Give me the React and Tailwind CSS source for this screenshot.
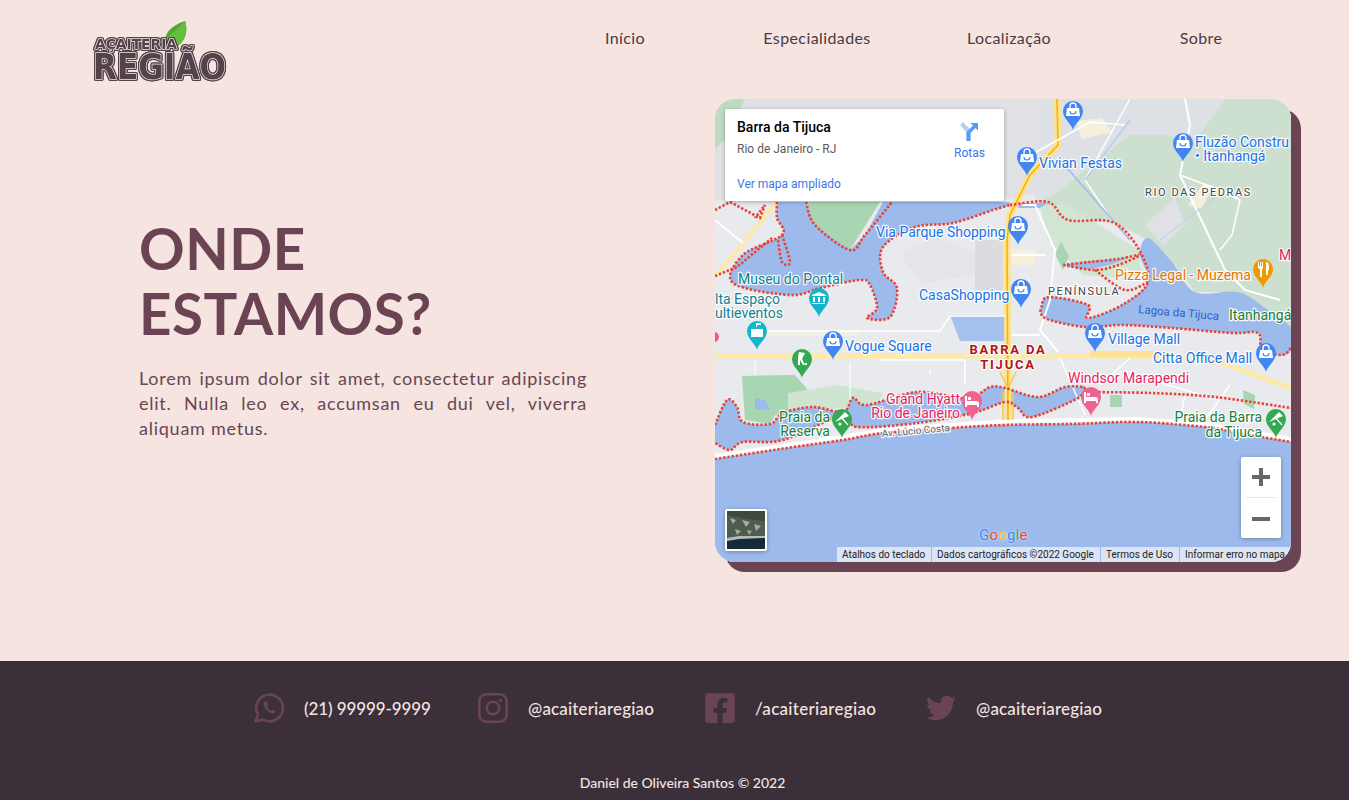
import React from "react";
import { FaFacebookSquare, FaTwitter } from "react-icons/fa";

const sans = "font-['Lato','Noto_Sans',sans-serif]";
const road = "fill-none stroke-white";

function smooth(s, close = false) {
  const p = s.trim().split(/\s+/).map((q) => q.split(",").map(Number));
  const n = p.length;
  const at = (i) => (close ? p[(i + n) % n] : p[Math.max(0, Math.min(n - 1, i))]);
  let d = `M${p[0][0]} ${p[0][1]}`;
  const last = close ? n : n - 1;
  for (let i = 0; i < last; i++) {
    const a = at(i - 1), b = at(i), c = at(i + 1), e = at(i + 2);
    const c1 = [b[0] + (c[0] - a[0]) / 6, b[1] + (c[1] - a[1]) / 6];
    const c2 = [c[0] - (e[0] - b[0]) / 6, c[1] - (e[1] - b[1]) / 6];
    d += `C${c1[0].toFixed(1)} ${c1[1].toFixed(1)} ${c2[0].toFixed(1)} ${c2[1].toFixed(1)} ${c[0]} ${c[1]}`;
  }
  return close ? d + "Z" : d;
}

const COAST = "715,459 780,449 843,440 883,433 950,428 1005,425 1072,424 1138,422 1205,427 1238,433 1291,442";
const LAGOON_W = "777,202 777,218 782,235 743,255 733,283 790,295 820,288 860,280 870,285 877,308 867,318 890,317 897,288 883,272 883,247 915,227 953,223 993,210 1010,205";
const LAGOON_E = "1148,238 1172,262 1195,292 1238,292 1265,308 1291,328 1291,350 1282,355 1262,350 1258,333 1232,333 1172,328 1122,325 1085,327 1045,318 1042,305 1050,297 1088,305 1088,318 1122,305 1148,282 1140,255";
const BEACH_TOP = "715,425 727,400 737,407 743,422 770,424 783,413 813,407 843,412 853,398 867,405 917,392 960,398 977,395 990,387 1005,388 1038,397 1065,387 1085,387";
const BEACH_BOT = "1085,387 1078,398 1032,417 1018,408 1005,402 973,413 917,423 857,427 843,415 783,440 743,442 730,450 715,443";

function Pin({ x, y, color, kind }) {
  const cx = x, cy = y - 19;
  return (
    <g>
      <path d={`M${x} ${y}C${x - 1} ${y - 6} ${x - 10} ${y - 11} ${x - 10} ${y - 19}a10 10 0 1 1 20 0C${x + 10} ${y - 11} ${x + 1} ${y - 6} ${x} ${y}Z`} fill={color} />
      {kind === "bag" && (
        <g>
          <path d={`M${cx - 6} ${cy - 3}h12l1 8h-14Z`} fill="#fff" />
          <path d={`M${cx - 3} ${cy - 3}v-2a3 3 0 0 1 6 0v2`} fill="none" stroke="#fff" strokeWidth="1.3" />
          <path d={`M${cx - 3} ${cy}a3 3 0 0 0 6 0`} fill="none" stroke={color} strokeWidth="1.2" />
        </g>
      )}
      {kind === "museum" && <path d={`M${cx} ${cy - 6}l7 3v1h-14v-1Zm-6 5h2v5h-2Zm5 0h2v5h-2Zm5 0h2v5h-2Zm-11 6h13v1h-13Z`} fill="#fff" />}
      {kind === "flag" && <path d={`M${cx - 6} ${cy - 2}h12v8h-12Zm5-6h1v4h-1Zm1 0h4v2h-4Z`} fill="#fff" />}
      {kind === "golf" && <path d={`M${cx - 3} ${cy - 7}l6 1-3 6 3 6h-2l-3-5v5h-2v-8Zm6 11h2v2h-2Z`} fill="#fff" />}
      {kind === "beach" && (
        <g>
          <path d={`M${cx - 7} ${cy + 3}l10-10 4 4Z`} fill="#fff" />
          <path d={`M${cx - 1} ${cy - 2}l7 8`} stroke="#fff" strokeWidth="1.2" />
          <circle cx={cx - 2} cy={cy + 5} r="1.6" fill="#fff" />
        </g>
      )}
      {kind === "hotel" && <path d={`M${cx - 7} ${cy - 5}h2v5h9a3 3 0 0 1 3 3v3h-2v-2h-10v2h-2Zm3 1h3v3h-3Z`} fill="#fff" />}
      {kind === "food" && <path d={`M${cx - 5} ${cy - 7}h1v4h1v-4h1v4h1v-4h1v6l-1 1v8h-2v-8l-2-1Zm8 0c2 0 3 2 3 5v3h-1v5h-2Z`} fill="#fff" />}
    </g>
  );
}

function L({ x, y, c, children, a = "start", s = 14, w = 400, t = 0, r }) {
  return (
    <text
      x={x}
      y={y}
      fill={c}
      textAnchor={a}
      fontSize={s}
      fontWeight={w}
      letterSpacing={t}
      transform={r}
      stroke="#ffffff"
      strokeWidth="2.5"
      strokeOpacity="0.9"
      strokeLinejoin="round"
      className="font-['Roboto',sans-serif] [paint-order:stroke]"
    >
      {children}
    </text>
  );
}

function MapArt() {
  const dots = "fill-none stroke-[#e94335]";
  const water = "#9cbbec";
  return (
    <svg viewBox="715 99 576 463" className="block h-full w-full">
      <rect x="715" y="99" width="576" height="463" fill="#e8eaed" />
      <path d="M715 99H1040L1060 190 1000 200H715Z" fill="#dfe1e5" />
      <path d="M715 99h30l-20 40-10 10Z" fill="#bfdcc3" />
      <path d="M1040 99H1225L1200 150 1130 135 1060 190 1035 205Z" fill="#dde0e4" />
      <path d="M1225 99H1291V330L1238 292H1195L1172 262 1148 240 1112 222 1068 220 1035 205 1060 190 1130 135 1170 135 1190 150 1200 135Z" fill="#cde0d0" />
      <path d="M1145 225l30-28 10 28-22 20Z" fill="#dfe1e5" />
      <path d="M1188 205l16-22 8 4-10 22Z" fill="#f3efdb" />
      <path d="M1076 121l26-3 10 14-30 7Z" fill="#f5f0dc" />
      <path d="M1010 250h25v15h-25Z" fill="#f5f0dc" />
      <path d="M806 202H880L850 250 815 225Z" fill="#a8d5b2" />
      <path d="M900 255l35-18 40 15 8 20-60 12Z" fill="#e3e5e8" />
      <path d="M975 240h28v50h-28Z" fill="#dadce0" />
      <path d="M1040 205h28l70 45 5 30-60-5-35-35Z" fill="#d2e5d3" />
      <path d="M742 376L795 375 812 395 810 403 775 415 770 424 745 420Z" fill="#a8d5b2" />
      <path d="M755 398l10 2 5 10-15-1Z" fill={water} />
      <path d="M788 393l50-8 45 8-6 12-89 8Z" fill="#cfe5d1" />
      <path d="M748 331h110v5h-110Z" fill="#f2efe3" />
      <path d="M950 315h55v26h-45Z" fill="#a4c1ed" />
      <path d="M1063 270l-8-16 6-12 8 14Z" fill="#a8d5b2" />
      <path d="M1243 390l12 5-1 14-10-5Z" fill="#a8d5b2" />
      <path d="M1110 395h12v12h-12Z" fill="#a8d5b2" />

      {/* water */}
      <path d={smooth(COAST) + "V562H715Z"} fill={water} />
      <path d={smooth(LAGOON_W) + "L1010 202H883L865 235 850 250 815 225 806 202Z"} fill={water} />
      <path d="M1005 203H1048L1040 208 1020 208Z" fill={water} />
      <path d={smooth(LAGOON_E, true)} fill={water} />
      <path d="M1063 265l25-4 30-2 15-3-20 8-25 6Z" fill={water} />
      <path d={smooth(BEACH_TOP) + smooth(BEACH_BOT).replace(/^M[^C]+/, "") + "Z"} fill={water} />

      {/* roads */}
      <path d="M715 356H1150L1222 363 1291 388" className="fill-none stroke-[#fde9a8]" strokeWidth="5" />
      <path d="M1090 354H1155" className="fill-none stroke-[#fde293]" strokeWidth="6" />
      <path d="M715 456L843 437 883 430 950 425 1010 421 1138 419 1205 424 1291 439" className={road} strokeWidth="4" />
      <path d="M715 277L777 202" className="fill-none stroke-[#fde9a8]" strokeWidth="4" />
      <path d="M715 220L743 243" className={road} strokeWidth="2" />
      <path d="M1057 99L1058 145 1030 175 1010 215 1007 240 1008 420" className="fill-none stroke-[#fde293]" strokeWidth="7" />
      <path d="M1057 99L1058 145 1030 175 1010 215 1007 240 1008 420" className="fill-none stroke-[#f2b705]" strokeWidth="1.6" />
      <path d="M1000 372L1008 388 1016 372M1003 420V392M1013 420V392" className="fill-none stroke-[#f8c74e]" strokeWidth="1.6" />
      <path d="M1022 160L1090 122 1125 125M1130 99L1085 180 1115 225" className={road} strokeWidth="1.5" />
      <path d="M1185 99L1190 125 1180 175 1225 270 1245 290 1280 300" className={road} strokeWidth="2" />
      <path d="M1180 175L1220 190 1240 200 1232 235 1220 250" className={road} strokeWidth="1.5" />
      <path d="M1160 240L1225 190" className="fill-none stroke-[#b6cdf0]" strokeWidth="1" />
      <path d="M1060 160L1130 240" className="fill-none stroke-[#9cbbec]" strokeWidth="1.5" />
      <path d="M1085 180L1130 120" className="fill-none stroke-[#b6cdf0]" strokeWidth="1.5" />
      <path d="M1022 205H1035L1055 250 1050 300 1040 330 1058 352M1012 255H1045M1012 335H1040" className={road} strokeWidth="2" />
      <path d="M748 331H940L950 316H1005" className={road} strokeWidth="1.5" />
      <path d="M880 360H965V385M1060 358L1085 415M1130 358L1100 385M1150 380L1220 400M1185 395L1180 420M1230 385L1205 420" className={road} strokeWidth="1.5" />
      <path d="M755 360V375M850 362V400M930 370V375" className={road} strokeWidth="1" />

      {/* red dotted border */}
      <g strokeWidth="2.6" strokeDasharray="2.4 1.8" className={dots}>
        <path d={smooth(COAST)} />
        <path d={smooth(LAGOON_W)} />
        <path d={smooth("806,202 815,225 850,250 865,235 892,202")} />
        <path d={smooth("1010,205 1048,202 1068,220 1112,222 1138,248 1148,282 1122,305 1088,318 1088,305 1050,297 1042,305 1045,318 1085,327 1122,325 1172,328 1232,333 1258,333 1262,350 1282,355 1291,348")} />
        <path d={smooth("782,235 790,262 782,262 778,240")} />
        <path d="M715 276L737 267 772 238M715 210L730 202M730 202L760 218 765 205 755 218" />
        <path d={smooth("1063,265 1090,262 1118,259 1140,255 1118,265 1095,270 1063,265")} />
        <path d={smooth("1095,270 1125,290 1148,282")} />
        <path d={smooth(BEACH_TOP)} />
        <path d={smooth("1090,392 1150,393 1215,397 1291,408")} />
        <path d={smooth(BEACH_BOT)} />
      </g>

      {/* pins */}
      <Pin x={1073} y={130} color="#4285f4" kind="bag" />
      <Pin x={1183} y={162} color="#4285f4" kind="bag" />
      <Pin x={1027} y={176} color="#4285f4" kind="bag" />
      <Pin x={1018} y={245} color="#4285f4" kind="bag" />
      <Pin x={1021} y={308} color="#4285f4" kind="bag" />
      <Pin x={1095} y={352} color="#4285f4" kind="bag" />
      <Pin x={1266} y={372} color="#4285f4" kind="bag" />
      <Pin x={833} y={360} color="#4285f4" kind="bag" />
      <Pin x={819} y={317} color="#12b5cb" kind="museum" />
      <Pin x={757} y={350} color="#12b5cb" kind="flag" />
      <Pin x={802} y={378} color="#34a853" kind="golf" />
      <Pin x={842} y={438} color="#34a853" kind="beach" />
      <Pin x={1276} y={438} color="#34a853" kind="beach" />
      <Pin x={972} y={420} color="#f06292" kind="hotel" />
      <Pin x={1091} y={416} color="#f06292" kind="hotel" />
      <Pin x={1263} y={288} color="#f29900" kind="food" />
      <circle cx="714" cy="337" r="5" fill="#ec5a8a" />

      {/* labels */}
      <L x={1039} y={168} c="#1a73e8">Vivian Festas</L>
      <L x={1195} y={147} c="#1a73e8">Fluzão Constru</L>
      <L x={1195} y={161} c="#1a73e8">• Itanhangá</L>
      <L x={1145} y={196} c="#444444" s={11} t={1.6}>RIO DAS PEDRAS</L>
      <L x={876} y={237} c="#1a73e8">Via Parque Shopping</L>
      <L x={738} y={284} c="#12828f">Museu do Pontal</L>
      <L x={715} y={304} c="#12828f">lta Espaço</L>
      <L x={715} y={318} c="#12828f">ultieventos</L>
      <L x={919} y={300} c="#1a73e8">CasaShopping</L>
      <L x={1048} y={295} c="#444444" s={11} t={1.5}>PENÍNSULA</L>
      <L x={1115} y={280} c="#e37400">Pizza Legal - Muzema</L>
      <L x={1279} y={260} c="#e91e63">M</L>
      <text x="1138" y="313" fill="#2a62c4" fontSize="11.5" transform="rotate(5 1138 313)" className="font-['Roboto',sans-serif]">Lagoa da Tijuca</text>
      <L x={1229} y={320} c="#188038">Itanhangá</L>
      <L x={845} y={351} c="#1a73e8">Vogue Square</L>
      <L x={1108} y={344} c="#1a73e8">Village Mall</L>
      <L x={1153} y={363} c="#1a73e8">Citta Office Mall</L>
      <L x={1008} y={354} a="middle" c="#b31412" s={13} w={700} t={1.8}>BARRA DA</L>
      <L x={1008} y={369} a="middle" c="#b31412" s={13} w={700} t={1.8}>TIJUCA</L>
      <L x={1068} y={383} c="#e91e63">Windsor Marapendi</L>
      <L x={960} y={404} a="end" c="#e91e63">Grand Hyatt</L>
      <L x={960} y={418} a="end" c="#e91e63">Rio de Janeiro</L>
      <L x={830} y={422} a="end" c="#188038">Praia da</L>
      <L x={830} y={436} a="end" c="#188038">Reserva</L>
      <L x={882} y={437} c="#5f6368" s={10} r="rotate(-5 882 437)">Av. Lúcio Costa</L>
      <L x={1262} y={422} a="end" c="#188038">Praia da Barra</L>
      <L x={1262} y={437} a="end" c="#188038">da Tijuca</L>
    </svg>
  );
}

function Logo() {
  const word = "font-['DejaVu_Sans',sans-serif] font-bold [paint-order:stroke]";
  return (
    <svg viewBox="0 0 190 80" className="block h-[80px] w-[190px]" role="img" aria-label="Açaiteria Região">
      <path d="M77 21C78 12 85 6 97 2 100 11 98 21 90 27Z" fill="#4fa92c" />
      <path d="M77 21C83 15 90 9 97 2 100 11 98 21 90 27Z" fill="#66bd42" />
      <g
        fill="#54424a"
        stroke="#f0e8e7"
        strokeWidth="1.5"
        strokeLinejoin="round"
        className="[filter:drop-shadow(1px_0_0_#54424a)_drop-shadow(-1px_0_0_#54424a)_drop-shadow(0_1px_0_#54424a)_drop-shadow(0_-1px_0_#54424a)]"
      >
        <text x="7" y="30" fontSize="14" textLength="82" lengthAdjust="spacingAndGlyphs" className={word}>AÇAITERIA</text>
        <text x="5" y="60" fontSize="36" textLength="133" lengthAdjust="spacingAndGlyphs" className={word}>REGIÃO</text>
      </g>
    </svg>
  );
}

function WhatsIcon() {
  return (
    <svg viewBox="0 0 30 30" className="h-[30px] w-[30px] text-[#6b4454]" fill="none" stroke="currentColor">
      <path d="M1.5 28.5L4 21.5A13.3 13.3 0 1 1 9 26.5Z" strokeWidth="2.6" strokeLinejoin="round" />
      <path d="M10.5 8.5C9 9.5 9 12 11 15c2 3 5 5.5 8 5.5 1.5 0 2.5-1 2.5-2.5l-3-1.5-1.3 1.3c-1.5-.5-3.5-2.3-4.2-4.2l1.2-1.4L13 8.2Z" fill="currentColor" stroke="none" />
    </svg>
  );
}

function InstaIcon() {
  return (
    <svg viewBox="0 0 30 30" className="h-[30px] w-[30px] text-[#6b4454]" fill="none" stroke="currentColor" strokeWidth="2.6">
      <rect x="1.3" y="1.3" width="27.4" height="27.4" rx="7" />
      <circle cx="15" cy="15" r="6.3" />
      <circle cx="22.6" cy="7.4" r="1.6" fill="currentColor" stroke="none" />
    </svg>
  );
}

function FbIcon() {
  return <FaFacebookSquare className="h-[34px] w-[30px] -my-[2px] text-[#6b4454]" />;
}

function TwIcon() {
  return <FaTwitter className="h-[30px] w-[30px] text-[#6b4454]" />;
}

function Contact({ icon: Icon, children, w, t }) {
  return (
    <div className="flex items-center gap-5">
      <Icon />
      <span className={`whitespace-nowrap pt-[1px] text-[17px] font-medium text-[#f5e4e0] ${w} ${t}`}>{children}</span>
    </div>
  );
}

export default function App() {
  return (
    <div className={`flex min-h-[800px] flex-col bg-[#f5e4e0] ${sans}`}>
      <header className="flex h-[99px]">
        <div className="ml-[88px] mt-[19px] h-[80px]">
          <Logo />
        </div>
        <nav className="ml-[251px] grid h-[76px] w-[768px] grid-cols-4 items-center text-center text-[16px] tracking-[0.4px] text-[#4a3b43]">
          <a>Início</a>
          <a>Especialidades</a>
          <a>Localização</a>
          <a>Sobre</a>
        </nav>
      </header>

      <main className="flex h-[562px] items-start pl-[139px]">
        <div className="flex h-[463px] w-[448px] flex-col pt-[117px] text-[#6b4454]">
          <h1 className="text-[56.5px] font-bold leading-[65px] tracking-[0.5px]">
            ONDE
            <br />
            ESTAMOS?
          </h1>
          <p className="mt-[20px] text-justify text-[18px] leading-[25px] tracking-[0.75px]">
            Lorem ipsum dolor sit amet, consectetur adipiscing elit. Nulla leo ex, accumsan eu dui vel, viverra aliquam metus.
          </p>
        </div>

        <div className="relative ml-[128px] h-[463px] w-[576px] overflow-hidden rounded-[20px] shadow-[10px_10px_0_#6b4454]">
          <MapArt />

          <div className="absolute left-[10px] top-[10px] h-[92px] w-[279px] rounded-[2px] bg-white font-['Roboto',sans-serif] shadow-[0_1px_4px_rgba(0,0,0,0.3)]">
            <div className="absolute left-[12px] top-[9px] text-[14px] font-medium leading-[18px] text-black">Barra da Tijuca</div>
            <div className="absolute left-[12px] top-[32px] text-[12px] leading-[16px] text-[#5b5b5b]">Rio de Janeiro - RJ</div>
            <div className="absolute left-[12px] top-[67px] text-[12px] leading-[16px] text-[#3b78e7]">Ver mapa ampliado</div>
            <div className="absolute left-[229px] top-[13px] flex flex-col items-center">
              <svg viewBox="0 0 18 19" className="h-[19px] w-[18px]">
                <path d="M0 3L3 0 10.5 7.5V19H6.5V10.5Z" fill="#b5d0f5" />
                <path d="M6.5 19V10L13 3.5 10.5 1H18V8.5L15.5 6 10.5 11V19Z" fill="#5c9aee" />
              </svg>
              <span className="mt-[5px] text-[12px] leading-[14px] text-[#3b78e7]">Rotas</span>
            </div>
          </div>

          <div className="absolute bottom-[11px] left-[10px] h-[42px] w-[42px] overflow-hidden rounded-[2px] border-2 border-white shadow-[0_1px_4px_rgba(0,0,0,0.3)]">
            <svg viewBox="0 0 38 38" className="block h-full w-full">
              <rect width="38" height="38" fill="#4f5c50" />
              <path d="M0 0H38V10L20 8 0 4Z" fill="#3d4a3e" />
              <path d="M3 7l6 2-3 4ZM15 9l8 2-4 5ZM27 13l7 2-5 5ZM8 18l6 2-4 4ZM20 19l5 1-3 4Z" fill="#a9aa9c" />
              <path d="M0 27L12 25 38 25V28L12 29 0 31Z" fill="#b5bdb8" />
              <path d="M0 30L12 28 38 27V38H0Z" fill="#14293a" />
            </svg>
          </div>

          <div className="absolute bottom-[19px] left-[264px] font-['Roboto',sans-serif] text-[15px] leading-[16px] tracking-[0.2px] [text-shadow:0_0_2px_#ffffff]">
            <span className="text-[#4285f4]">G</span>
            <span className="text-[#ea4335]">o</span>
            <span className="text-[#fbbc05]">o</span>
            <span className="text-[#4285f4]">g</span>
            <span className="text-[#34a853]">l</span>
            <span className="text-[#ea4335]">e</span>
          </div>

          <div className="absolute bottom-[24px] right-[10px] flex h-[81px] w-[40px] flex-col items-center rounded-[2px] bg-white shadow-[0_1px_4px_rgba(0,0,0,0.3)]">
            <svg viewBox="0 0 18 18" className="mt-[11px] h-[18px] w-[18px]">
              <path d="M7 0h4v7h7v4h-7v7H7v-7H0V7h7Z" fill="#666666" />
            </svg>
            <div className="mt-[11px] h-px w-[30px] bg-[#e6e6e6]" />
            <svg viewBox="0 0 18 4" className="mt-[19px] w-[18px]">
              <rect width="18" height="4" fill="#666666" />
            </svg>
          </div>

          <div className="absolute bottom-0 right-0 flex h-[15px] gap-px font-['Roboto',sans-serif] text-[10px] leading-[15px] text-[#222222]">
            {[
              ["Atalhos do teclado", "w-[94px]"],
              ["Dados cartográficos ©2022 Google", "w-[168px]"],
              ["Termos de Uso", "w-[78px]"],
              ["Informar erro no mapa", "w-[111px]"],
            ].map(([t, w]) => (
              <span key={t} className={`whitespace-nowrap bg-[#dbe5f6] pl-[5px] ${w}`}>{t}</span>
            ))}
          </div>
        </div>
      </main>

      <footer className="flex h-[139px] flex-col items-center bg-[#3b3039]">
        <div className="ml-[7px] mt-[32px] flex h-[30px] gap-[48px]">
          <Contact icon={WhatsIcon} w="w-[126px]" t="tracking-[-0.1px]">(21) 99999-9999</Contact>
          <Contact icon={InstaIcon} w="w-[129px]" t="tracking-[0.15px]">@acaiteriaregiao</Contact>
          <Contact icon={FbIcon} w="w-[123px]" t="tracking-[0.3px]">/acaiteriaregiao</Contact>
          <Contact icon={TwIcon} w="w-[126px]" t="tracking-[0.15px]">@acaiteriaregiao</Contact>
        </div>
        <div className="ml-[16px] mt-[50px] text-[14px] font-medium leading-[20px] text-[#f5e4e0]">Daniel de Oliveira Santos © 2022</div>
      </footer>
    </div>
  );
}
